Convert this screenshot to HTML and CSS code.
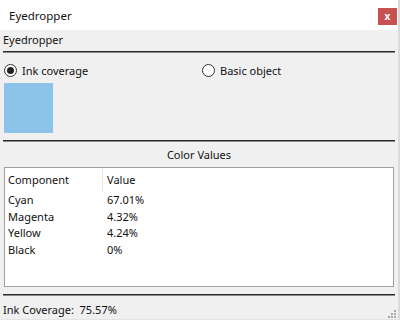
FILE: index.html
```html
<!DOCTYPE html>
<html>
<head>
<meta charset="utf-8">
<link rel="stylesheet" href="styles.css">
</head>
<body>
<div class="window">
  <div class="titlebar">
    <span class="title">Eyedropper</span>
    <span class="close">x</span>
  </div>
  <div class="panel-label">Eyedropper</div>
  <div class="rule"></div>
  <div class="options">
    <label class="radio-item first"><span class="radio checked"></span>Ink coverage</label>
    <label class="radio-item"><span class="radio"></span>Basic object</label>
  </div>
  <div class="swatch"></div>
  <div class="rule rule-b"></div>
  <div class="section-title">Color Values</div>
  <div class="listbox">
    <div class="row header">
      <div class="cell c1">Component</div>
      <div class="cell c2">Value</div>
    </div>
    <div class="row"><div class="cell c1">Cyan</div><div class="cell c2">67.01%</div></div>
    <div class="row"><div class="cell c1">Magenta</div><div class="cell c2">4.32%</div></div>
    <div class="row"><div class="cell c1">Yellow</div><div class="cell c2">4.24%</div></div>
    <div class="row"><div class="cell c1">Black</div><div class="cell c2">0%</div></div>
  </div>
  <div class="rule rule-c"></div>
  <div class="status">
    <span class="status-text">Ink Coverage:&nbsp; 75.57%</span>
    <svg class="grip" width="9" height="9" viewBox="0 0 9 9">
      <rect x="7" y="1" width="2" height="2" fill="#a8a8a8"/>
      <rect x="4" y="4" width="2" height="2" fill="#a8a8a8"/>
      <rect x="7" y="4" width="2" height="2" fill="#a8a8a8"/>
      <rect x="1" y="7" width="2" height="2" fill="#a8a8a8"/>
      <rect x="4" y="7" width="2" height="2" fill="#a8a8a8"/>
      <rect x="7" y="7" width="2" height="2" fill="#a8a8a8"/>
    </svg>
  </div>
</div>
</body>
</html>
```

FILE: styles.css
```css
* { box-sizing: border-box; }
html, body { margin: 0; padding: 0; }
body {
  width: 400px;
  height: 320px;
  overflow: hidden;
  font-family: "Noto Sans", "Open Sans", sans-serif;
  font-size: 11px;
  color: #111;
  background: #f0f0f0;
}
.window {
  width: 400px;
  height: 320px;
  background: #f0f0f0;
  border-right: 2px solid #dadada;
  border-bottom: 1px solid #e4e4e4;
  display: flex;
  flex-direction: column;
}
.titlebar {
  height: 30px;
  background: #fff;
  display: flex;
  align-items: center;
  justify-content: space-between;
  padding-left: 9px;
  padding-right: 1px;
  flex: none;
}
.title { font-size: 11.5px; }
.close {
  width: 19px;
  height: 17px;
  background: #c75050;
  color: #fff;
  font-weight: bold;
  font-size: 10px;
  line-height: 16px;
  text-align: center;
  margin-top: 3px;
}
.panel-label {
  height: 20px;
  line-height: 20px;
  padding-left: 3px;
  flex: none;
}
.rule {
  flex: none;
  height: 2px;
  margin: 1px 3px 0 3px;
  border-top: 1px solid #2a2a2a;
  border-bottom: 1px solid #8a8a8a;
}
.rule-b { margin-top: 7px; }
.rule-c { margin-top: 7px; }
.options {
  flex: none;
  height: 20px;
  margin-top: 7px;
  display: flex;
  align-items: center;
}
.radio-item {
  display: flex;
  align-items: center;
  gap: 5px;
}
.radio-item.first {
  width: 202px;
  padding-left: 4px;
}
.radio {
  width: 13px;
  height: 13px;
  border-radius: 50%;
  border: 1px solid #333;
  background: #fff;
  display: inline-flex;
  align-items: center;
  justify-content: center;
}
.radio.checked::after {
  content: "";
  width: 7px;
  height: 7px;
  border-radius: 50%;
  background: #222;
}
.swatch {
  flex: none;
  width: 49px;
  height: 50px;
  margin: 3px 0 0 4px;
  background: #8cc3e8;
}
.section-title {
  flex: none;
  height: 20px;
  line-height: 20px;
  margin-top: 3px;
  text-align: center;
}
.listbox {
  flex: none;
  height: 120px;
  margin: 2px 4px 0 4px;
  background: #fff;
  border: 1px solid #a0a0a0;
}
.row {
  display: flex;
  height: 16.7px;
  line-height: 16.7px;
}
.row.header {
  height: 24px;
  line-height: 24px;
}
.cell.c1 {
  width: 98px;
  padding-left: 3px;
}
.cell.c2 {
  padding-left: 4px;
}
.header .c1 { border-right: 1px solid #e5e5e5; }
.status {
  flex: none;
  height: 20px;
  margin-top: 3px;
  display: flex;
  align-items: center;
  justify-content: space-between;
  padding-left: 3px;
  padding-right: 2px;
}
.grip { margin-top: 8px; }
```
